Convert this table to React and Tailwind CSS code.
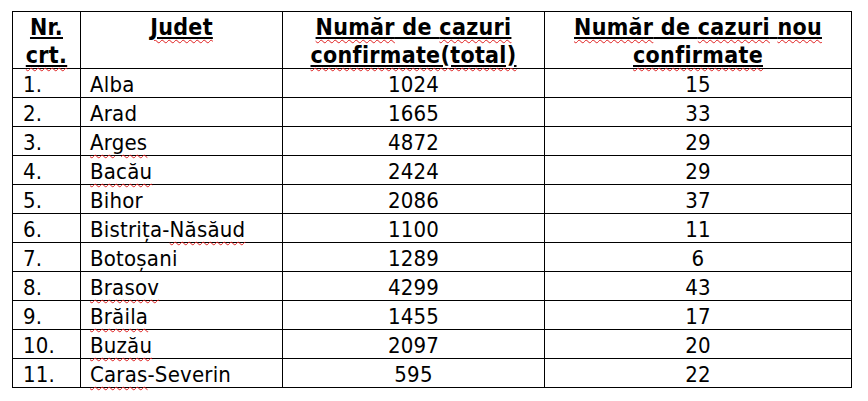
import React from "react";

const rows = [
  ["1.", [["Alba", false]], "1024", "15"],
  ["2.", [["Arad", false]], "1665", "33"],
  ["3.", [["Arges", true]], "4872", "29"],
  ["4.", [["Bacău", true]], "2424", "29"],
  ["5.", [["Bihor", false]], "2086", "37"],
  ["6.", [["Bistrița-", false], ["Năsăud", true]], "1100", "11"],
  ["7.", [["Botoșani", false]], "1289", "6"],
  ["8.", [["Brasov", true]], "4299", "43"],
  ["9.", [["Brăila", true]], "1455", "17"],
  ["10.", [["Buzău", true]], "2097", "20"],
  ["11.", [["Caras", true], ["-Severin", false]], "595", "22"],
];

const Sq = ({ children }) => (
  <span className="underline decoration-wavy decoration-[#e02020] decoration-1 underline-offset-[4px]">
    {children}
  </span>
);

const cell = "border-r border-b border-black";
const head = `${cell} h-[57px] text-center font-bold text-[23px] leading-[28px] tracking-[0.3px] pt-[1px] whitespace-nowrap`;
const body = `${cell} h-[29px] text-[22px] leading-[24px] tracking-[0.2px] pt-[4px]`;

export default function App() {
  return (
    <div
      className="w-[868px] h-[401px] bg-white text-black pt-[11px] pl-[12px]"
      style={{ fontFamily: '"DejaVu Sans Condensed", "DejaVu Sans", sans-serif' }}
    >
      <div className="grid grid-cols-[68px_202px_262px_307px] w-[840px] border-t border-l border-black">
        <div className={head}>
          <div className="underline">Nr.</div>
          <div className="underline"><Sq>crt.</Sq></div>
        </div>
        <div className={head}>
          <div className="underline"><Sq>Judet</Sq></div>
        </div>
        <div className={head}>
          <div className="underline"><Sq>Număr</Sq> de <Sq>cazuri</Sq></div>
          <div className="underline"><Sq>confirmate(total)</Sq></div>
        </div>
        <div className={head}>
          <div className="underline"><Sq>Număr</Sq> de <Sq>cazuri</Sq> <Sq>nou</Sq></div>
          <div className="underline"><Sq>confirmate</Sq></div>
        </div>
        {rows.map(([nr, name, total, nou]) => (
          <React.Fragment key={nr}>
            <div className={`${body} pl-[10px]`}>{nr}</div>
            <div className={`${body} pl-[9px] whitespace-nowrap`}>
              {name.map(([t, s], i) => (s ? <Sq key={i}>{t}</Sq> : <span key={i}>{t}</span>))}
            </div>
            <div className={`${body} text-center`}>{total}</div>
            <div className={`${body} text-center`}>{nou}</div>
          </React.Fragment>
        ))}
      </div>
    </div>
  );
}
